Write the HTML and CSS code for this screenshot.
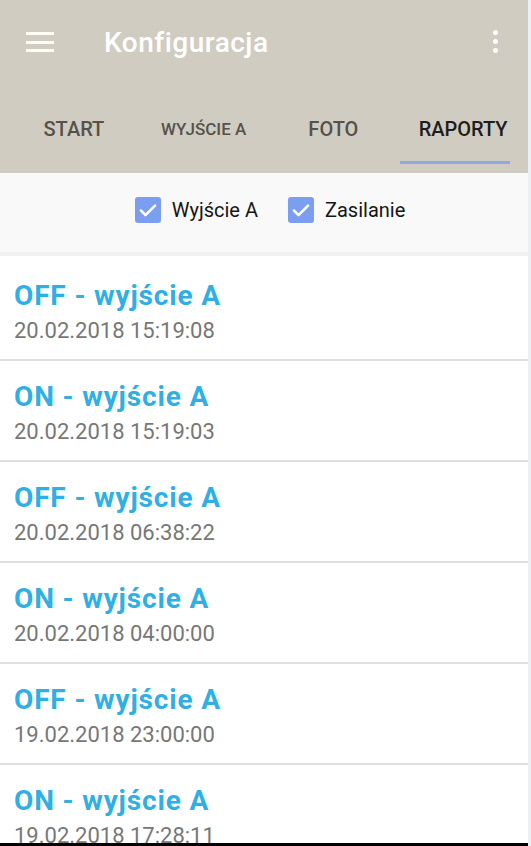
FILE: index.html
```html
<!DOCTYPE html>
<html>
	<head>
		<meta charset="UTF-8">
		<title>Konfiguracja</title>
		<link rel="stylesheet" href="styles.css">
	</head>

	<body>

		<div class="screen">
			<div class="app">

				<header class="appbar">
					<div class="toolbar">
						<div class="menu">
							<span></span><span></span><span></span>
						</div>
						<h1 class="title">Konfiguracja</h1>
						<div class="more">
							<span></span><span></span><span></span>
						</div>
					</div>
					<nav class="tabs">
						<div class="tab">START</div>
						<div class="tab tab-small">WYJŚCIE A</div>
						<div class="tab">FOTO</div>
						<div class="tab active">RAPORTY<i class="indicator"></i></div>
					</nav>
				</header>

				<div class="filters">
					<label class="check"><span class="box"><svg viewBox="0 0 24 24"><path d="M5.5 12.5l4.2 4.2 8.8-8.8" /></svg></span>Wyjście A</label>
					<label class="check"><span class="box"><svg viewBox="0 0 24 24"><path d="M5.5 12.5l4.2 4.2 8.8-8.8" /></svg></span>Zasilanie</label>
				</div>

				<ul class="reports">
					<li><div class="event">OFF - wyjście A</div><div class="time">20.02.2018 15:19:08</div></li>
					<li><div class="event">ON - wyjście A</div><div class="time">20.02.2018 15:19:03</div></li>
					<li><div class="event">OFF - wyjście A</div><div class="time">20.02.2018 06:38:22</div></li>
					<li><div class="event">ON - wyjście A</div><div class="time">20.02.2018 04:00:00</div></li>
					<li><div class="event">OFF - wyjście A</div><div class="time">19.02.2018 23:00:00</div></li>
					<li><div class="event">ON - wyjście A</div><div class="time">19.02.2018 17:28:11</div></li>
				</ul>

			</div>
			<div class="navbar"></div>
		</div>
		<div class="scrollbar"></div>

	</body>

</html>
```

FILE: styles.css
```css
* { margin: 0; padding: 0; box-sizing: border-box }

body {
	display: flex;
	width: 531px;
	height: 846px;
	overflow: hidden;
	background: #fff;
	font-family: Roboto, "Liberation Sans", sans-serif;
}

.screen {
	width: 528px;
	display: flex;
	flex-direction: column;
}

.app {
	height: 843px;
	overflow: hidden;
	background: #fff;
}

.navbar {
	height: 3px;
	background: #000;
}

.scrollbar {
	width: 3px;
	background: #edf0f3;
}

/* app bar */

.appbar {
	background: #d0ccc1;
	height: 173px;
}

.toolbar {
	height: 84px;
	display: flex;
	align-items: center;
	padding: 0 30px 0 26px;
}

.menu {
	width: 28px;
	display: flex;
	flex-direction: column;
	gap: 5.5px;
}

.menu span {
	display: block;
	height: 3px;
	background: #fffdf5;
}

.title {
	flex: 1;
	margin-left: 50px;
	font-size: 28px;
	font-weight: 500;
	color: #fff;
	letter-spacing: 0.5px;
}

.more {
	display: flex;
	flex-direction: column;
	gap: 4px;
	margin-top: -2px;
}

.more span {
	display: block;
	width: 5px;
	height: 5px;
	border-radius: 50%;
	background: #fff;
}

.tabs {
	display: flex;
	padding-left: 9px;
	height: 89px;
}

.tab {
	width: 130px;
	padding-top: 34px;
	text-align: center;
	font-size: 20px;
	line-height: 22px;
	font-weight: 500;
	color: #55524b;
}

.tab-small {
	font-size: 17px;
}

.active {
	color: #1d1d1d;
}

.indicator {
	display: block;
	width: 110px;
	height: 3px;
	margin: 21px 0 0 2px;
	background: #8ea8e2;
}

/* filters */

.filters {
	height: 83px;
	display: flex;
	justify-content: center;
	align-items: center;
	gap: 30px;
	padding: 0 0 6px 12px;
	background: #f9f9f9;
	border-bottom: 4px solid #f1f1f1;
}

.check {
	display: flex;
	align-items: center;
	gap: 11px;
	font-size: 20px;
	color: #151515;
}

.box {
	width: 26px;
	height: 26px;
	border-radius: 3px;
	background: #7b9ef0;
	display: flex;
}

.box svg {
	width: 26px;
	height: 26px;
	fill: none;
	stroke: #fff;
	stroke-width: 2.4;
	stroke-linecap: round;
	stroke-linejoin: round;
}

/* list */

.reports {
	list-style: none;
	padding-top: 4px;
}

.reports li {
	height: 101px;
	padding: 21px 14px 0;
	border-bottom: 2px solid #dfdfdf;
}

.event {
	font-size: 28px;
	line-height: 30px;
	font-weight: 700;
	letter-spacing: 0.85px;
	color: #30afe4;
}

.time {
	margin-top: 7px;
	font-size: 22px;
	line-height: 26px;
	color: #777;
}
```
